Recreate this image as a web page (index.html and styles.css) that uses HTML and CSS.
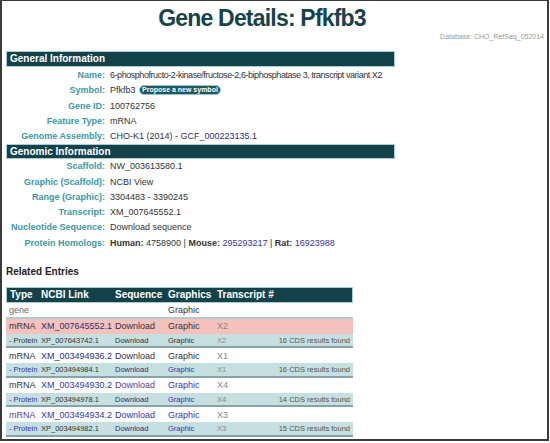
FILE: index.html
```html
<!DOCTYPE html>
<html>
<head>
<meta name="viewport" content="width=device-width, initial-scale=1">
<link rel="stylesheet" href="styles.css">
</head>
<body>
<div class="frame">
  <h1 class="title">Gene Details: Pfkfb3</h1>
  <div class="dbname">Database: CHO_RefSeq_052014</div>

  <div class="bar first">General Information</div>
  <div class="info first">
    <div class="lbl">Name:</div>
    <div class="val tight">6-phosphofructo-2-kinase/fructose-2,6-biphosphatase 3, transcript variant X2</div>
    <div class="lbl">Symbol:</div>
    <div class="val">Pfkfb3 <span class="btn">Propose a new symbol</span></div>
    <div class="lbl">Gene ID:</div>
    <div class="val">100762756</div>
    <div class="lbl">Feature Type:</div>
    <div class="val">mRNA</div>
    <div class="lbl">Genome Assembly:</div>
    <div class="val">CHO-K1 (2014) - <a class="navy" href="#">GCF_000223135.1</a></div>
  </div>

  <div class="bar">Genomic Information</div>
  <div class="info">
    <div class="lbl">Scaffold:</div>
    <div class="val">NW_003613580.1</div>
    <div class="lbl">Graphic (Scaffold):</div>
    <div class="val">NCBI View</div>
    <div class="lbl">Range (Graphic):</div>
    <div class="val">3304483 - 3390245</div>
    <div class="lbl">Transcript:</div>
    <div class="val">XM_007645552.1</div>
    <div class="lbl">Nucleotide Sequence:</div>
    <div class="val">Download sequence</div>
    <div class="lbl">Protein Homologs:</div>
    <div class="val"><b>Human:</b> 4758900 | <b>Mouse:</b> <a class="lnk" href="#">295293217</a> | <b>Rat:</b> <a class="lnk" href="#">16923988</a></div>
  </div>

  <h2 class="related">Related Entries</h2>
  <table class="entries">
    <colgroup>
      <col style="width:32px">
      <col style="width:74px">
      <col style="width:53px">
      <col style="width:49px">
      <col style="width:50px">
      <col>
    </colgroup>
    <thead>
      <tr><th>Type</th><th>NCBI Link</th><th>Sequence</th><th>Graphics</th><th colspan="2">Transcript #</th></tr>
    </thead>
    <tbody>
      <tr class="gene"><td class="gray">gene</td><td></td><td></td><td class="dk">Graphic</td><td></td><td></td></tr>

      <tr class="mrna current"><td class="dk">mRNA</td><td><a class="navy" href="#">XM_007645552.1</a></td><td class="dk">Download</td><td class="dk">Graphic</td><td class="mut">X2</td><td></td></tr>
      <tr class="prot"><td class="dk">- Protein</td><td class="dk">XP_007643742.1</td><td class="dk">Download</td><td class="dk">Graphic</td><td class="mut">X2</td><td class="cds">16 CDS results found</td></tr>

      <tr class="mrna"><td class="dk">mRNA</td><td><a class="navy" href="#">XM_003494936.2</a></td><td class="dk">Download</td><td class="dk">Graphic</td><td class="mut">X1</td><td></td></tr>
      <tr class="prot"><td><a class="lnk" href="#">- Protein</a></td><td class="dk">XP_003494984.1</td><td><a class="navy" href="#">Download</a></td><td><a class="lnk" href="#">Graphic</a></td><td class="mut">X1</td><td class="cds">16 CDS results found</td></tr>

      <tr class="mrna"><td class="dk">mRNA</td><td><a class="lnk" href="#">XM_003494930.2</a></td><td><a class="vis" href="#">Download</a></td><td><a class="lnk" href="#">Graphic</a></td><td class="mut">X4</td><td></td></tr>
      <tr class="prot"><td><a class="lnk" href="#">- Protein</a></td><td class="dk">XP_003494978.1</td><td><a class="navy" href="#">Download</a></td><td><a class="lnk" href="#">Graphic</a></td><td class="mut">X4</td><td class="cds">14 CDS results found</td></tr>

      <tr class="mrna"><td class="vis">mRNA</td><td><a class="lnk" href="#">XM_003494934.2</a></td><td><a class="lnk" href="#">Download</a></td><td><a class="lnk" href="#">Graphic</a></td><td class="mut">X3</td><td></td></tr>
      <tr class="prot"><td><a class="lnk" href="#">- Protein</a></td><td class="dk">XP_003494982.1</td><td><a class="navy" href="#">Download</a></td><td><a class="lnk" href="#">Graphic</a></td><td class="mut">X3</td><td class="cds">15 CDS results found</td></tr>
    </tbody>
  </table>
</div>
</body>
</html>
```

FILE: styles.css
```css
* {
  box-sizing: border-box;
}

body {
  margin: 0;
  background-color: #fff;
  font-family: "Liberation Sans", Arial, sans-serif;
  color: #333;
}

a {
  text-decoration: none;
}

.frame {
  width: 549px;
  height: 441px;
  overflow: hidden;
  border-left: 2px solid #3a3a3a;
  border-top: 1px solid #3a3a3a;
  border-right: 2px solid #3a3a3a;
  border-bottom: 2px solid #3a3a3a;
  padding: 0 2px 0 4px;
}

.title {
  margin: 3px 0 0 0;
  padding-right: 27px;
  text-align: center;
  font-size: 23px;
  line-height: 28px;
  letter-spacing: -0.8px;
  font-weight: bold;
  color: #16434b;
}

.dbname {
  text-align: right;
  font-size: 7px;
  line-height: 10px;
  color: #999;
  padding-right: 1px;
}

.bar {
  width: 389px;
  height: 15px;
  padding-left: 3px;
  background-color: #13424a;
  border: 1px solid #a9cdd0;
  color: #fff;
  font-size: 10px;
  line-height: 13px;
  font-weight: bold;
}

.bar.first {
  height: 16px;
  margin-top: 9px;
  line-height: 14px;
}

.info {
  display: grid;
  grid-template-columns: 99px auto;
  column-gap: 5px;
  width: 389px;
  font-size: 9px;
  line-height: 15.25px;
}

.info.first {
  padding-top: 1px;
}

.lbl {
  text-align: right;
  font-weight: bold;
  color: #3a98a5;
  white-space: nowrap;
}

.val {
  color: #333;
  white-space: nowrap;
}

.val.tight {
  letter-spacing: -0.45px;
}

.val b {
  color: #333;
}

.btn {
  display: inline-block;
  vertical-align: middle;
  margin-left: 1px;
  margin-top: -2px;
  height: 10px;
  padding: 0 2px;
  background-color: #1b5862;
  border: 1px solid #9cc5c9;
  border-radius: 6px;
  color: #fff;
  font-size: 7px;
  line-height: 8px;
  font-weight: bold;
}

.navy {
  color: #2b2f72;
}

.lnk {
  color: #3636a3;
}

.vis {
  color: #5b3c8f;
}

.dk {
  color: #333;
}

.gray {
  color: #666;
}

.mut {
  color: #888;
}

.related {
  margin: 14px 0 8px 0;
  font-size: 10px;
  line-height: 14px;
  font-weight: bold;
  color: #222;
}

.entries {
  width: 347px;
  table-layout: fixed;
  border-collapse: separate;
  border-spacing: 0;
}

.entries th {
  height: 16px;
  padding: 0 3px;
  text-align: left;
  white-space: nowrap;
  background-color: #13424a;
  border-top: 1px solid #a9cdd0;
  border-bottom: 1px solid #a9cdd0;
  color: #fff;
  font-size: 10px;
  font-weight: bold;
}

.entries th:first-child {
  border-left: 1px solid #a9cdd0;
}

.entries th:last-child {
  border-right: 1px solid #a9cdd0;
}

.entries td {
  padding: 0 3px;
  white-space: nowrap;
  overflow: hidden;
}

.gene td {
  height: 16px;
  font-size: 9px;
  border-bottom: 2px solid #b3cbcd;
}

.mrna td {
  height: 15px;
  font-size: 9px;
}

.current td {
  background-color: #f4c1bc;
}

.prot td {
  height: 14.5px;
  font-size: 7.5px;
  background-color: #c6dfe0;
  border-bottom: 2px solid #86a4a7;
}

.prot td.cds {
  text-align: right;
  color: #555;
}
```
